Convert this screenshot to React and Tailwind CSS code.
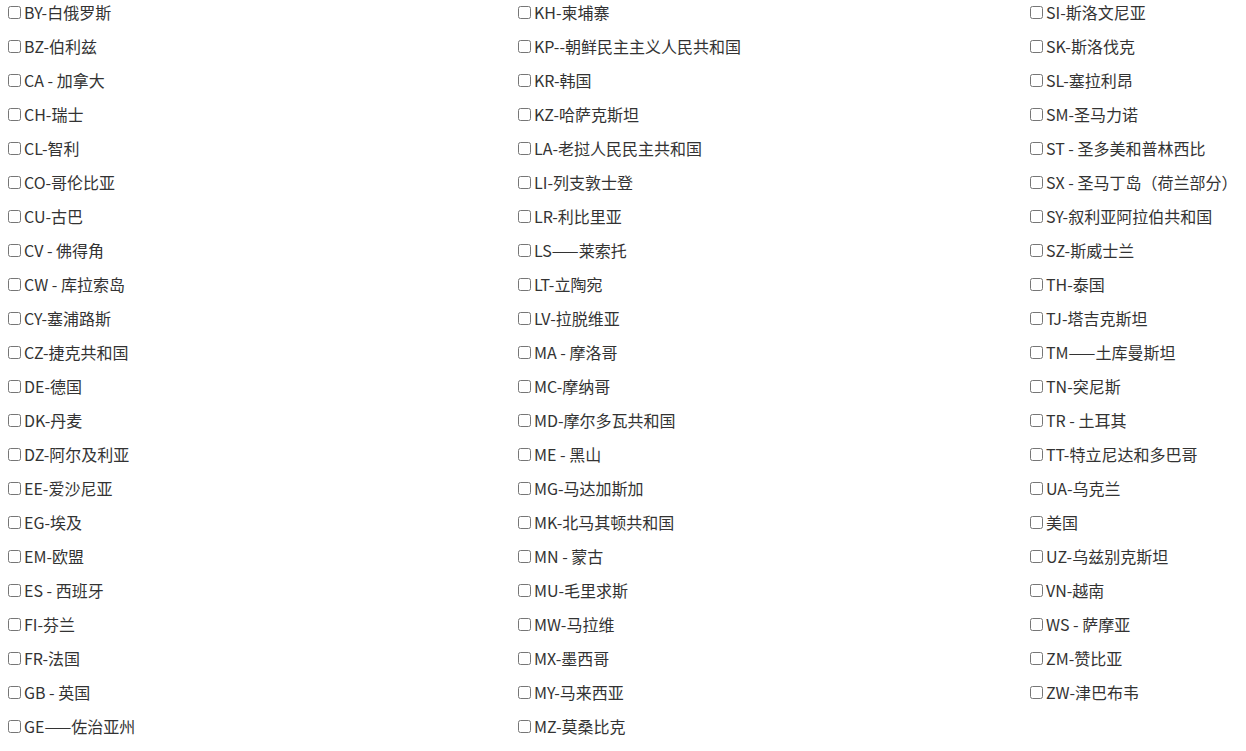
import React from 'react';

const col1 = [
  'BY-白俄罗斯', 'BZ-伯利兹', 'CA - 加拿大', 'CH-瑞士', 'CL-智利', 'CO-哥伦比亚', 'CU-古巴', 'CV - 佛得角',
  'CW - 库拉索岛', 'CY-塞浦路斯', 'CZ-捷克共和国', 'DE-德国', 'DK-丹麦', 'DZ-阿尔及利亚', 'EE-爱沙尼亚',
  'EG-埃及', 'EM-欧盟', 'ES - 西班牙', 'FI-芬兰', 'FR-法国', 'GB - 英国', 'GE——佐治亚州',
];

const col2 = [
  'KH-柬埔寨', 'KP--朝鲜民主主义人民共和国', 'KR-韩国', 'KZ-哈萨克斯坦', 'LA-老挝人民民主共和国', 'LI-列支敦士登',
  'LR-利比里亚', 'LS——莱索托', 'LT-立陶宛', 'LV-拉脱维亚', 'MA - 摩洛哥', 'MC-摩纳哥', 'MD-摩尔多瓦共和国',
  'ME - 黑山', 'MG-马达加斯加', 'MK-北马其顿共和国', 'MN - 蒙古', 'MU-毛里求斯', 'MW-马拉维', 'MX-墨西哥',
  'MY-马来西亚', 'MZ-莫桑比克',
];

const col3 = [
  'SI-斯洛文尼亚', 'SK-斯洛伐克', 'SL-塞拉利昂', 'SM-圣马力诺', 'ST - 圣多美和普林西比', 'SX - 圣马丁岛（荷兰部分）',
  'SY-叙利亚阿拉伯共和国', 'SZ-斯威士兰', 'TH-泰国', 'TJ-塔吉克斯坦', 'TM——土库曼斯坦', 'TN-突尼斯', 'TR - 土耳其',
  'TT-特立尼达和多巴哥', 'UA-乌克兰', '美国', 'UZ-乌兹别克斯坦', 'VN-越南', 'WS - 萨摩亚', 'ZM-赞比亚', 'ZW-津巴布韦',
];

const Column = ({ items, width }) => (
  <div className={`flex flex-col shrink-0 ${width}`}>
    {items.map((label) => (
      <label key={label} className="flex items-start h-[34px] cursor-pointer">
        <span className="flex items-center h-[25px]">
          <input type="checkbox" className="ml-[4px] mr-[3px] w-[13px] h-[13px]" />
          <span className="whitespace-nowrap">{label}</span>
        </span>
      </label>
    ))}
  </div>
);

export default function App() {
  return (
    <div
      className="flex pl-[4px] bg-white text-[16px] text-[#333333] leading-[25px] overflow-hidden w-[1246px]"
      style={{ fontFamily: '"Noto Sans CJK SC", "Noto Sans", sans-serif' }}
    >
      <Column items={col1} width="w-[510px]" />
      <Column items={col2} width="w-[512px]" />
      <Column items={col3} width="w-[220px]" />
    </div>
  );
}
